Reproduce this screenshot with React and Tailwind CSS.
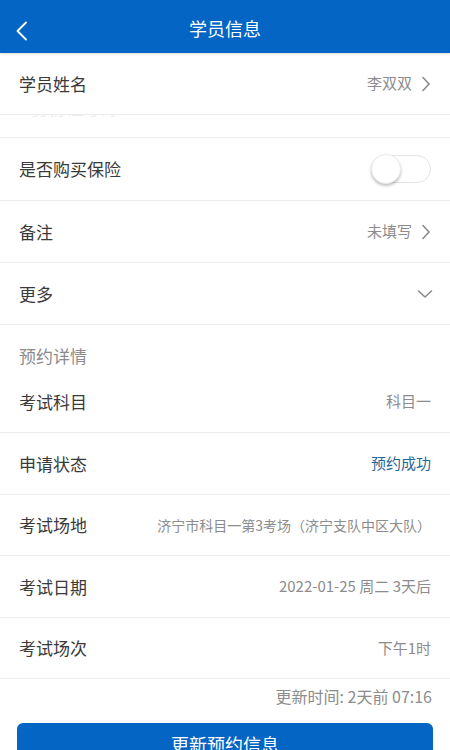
import React from "react";

const font = { fontFamily: '"Noto Sans CJK SC", "Noto Sans", sans-serif' };

const ChevronRight = () => (
    <svg width="10" height="16" viewBox="0 0 10 16" className="ml-[9px]">
        <path d="M2 1.5 L8 8 L2 14.5" fill="none" stroke="#8a8a8a" strokeWidth="1.6" strokeLinecap="round" strokeLinejoin="round" />
    </svg>
);

const ChevronDown = () => (
    <svg width="16" height="10" viewBox="0 0 16 10">
        <path d="M1.5 2 L8 8 L14.5 2" fill="none" stroke="#8a8a8a" strokeWidth="1.6" strokeLinecap="round" strokeLinejoin="round" />
    </svg>
);

function Row({ label, children, h = "h-[62px]" }) {
    return (
        <div className={`${h} flex items-center justify-between pl-[19px] pr-[19px] border-b border-[#ededed]`}>
            <span className="text-[17px] text-[#3a3a3a]">{label}</span>
            <div className="flex items-center">{children}</div>
        </div>
    );
}

const Value = ({ children, color = "text-[#8c8c8c]" }) => (
    <span className={`text-[15px] ${color}`}>{children}</span>
);

export default function App() {
    return (
        <div className="w-[450px] h-[750px] overflow-hidden bg-white" style={font}>
            {/* header */}
            <div className="h-[53px] bg-[#0565c4] flex items-center relative shadow-[0_1px_2px_rgba(0,0,0,0.15)]">
                <svg width="14" height="20" viewBox="0 0 14 20" className="absolute left-[15px] top-[21px]">
                    <path d="M11 1.5 L2.5 10 L11 18.5" fill="none" stroke="white" strokeWidth="1.8" strokeLinecap="round" strokeLinejoin="round" />
                </svg>
                <h1 className="flex-1 text-center text-white text-[18px] leading-none pt-[3px]">学员信息</h1>
            </div>

            <Row label="学员姓名">
                <Value>李双双</Value>
                <ChevronRight />
            </Row>

            {/* partially hidden row */}
            <div className="h-[23px] overflow-hidden border-b border-[#ededed] pl-[32px]">
                <div className="-mt-[17px] text-[17px] leading-[19px] text-[#ececec]">身份证号码</div>
            </div>

            <Row label="是否购买保险" h="h-[63px]">
                <div className="relative w-[60px] h-[28px] rounded-full border border-[#e4e4e4] bg-white">
                    <div className="absolute -left-[1px] -top-[2px] w-[30px] h-[30px] rounded-full bg-white border border-[#ececec] shadow-[0_2px_3px_rgba(0,0,0,0.25)]" />
                </div>
            </Row>

            <Row label="备注">
                <Value>未填写</Value>
                <ChevronRight />
            </Row>

            <Row label="更多">
                <div className="mr-[-2px]">
                    <ChevronDown />
                </div>
            </Row>

            <div className="h-[46px] flex items-center pl-[19px] pt-[16px]">
                <span className="text-[17px] text-[#8c8c8c]">预约详情</span>
            </div>

            <Row label="考试科目" h="h-[62px]">
                <Value>科目一</Value>
            </Row>
            <Row label="申请状态" h="h-[62px]">
                <Value color="text-[#1f6796]">预约成功</Value>
            </Row>
            <Row label="考试场地" h="h-[61px]">
                <span className="text-[14px] text-[#8c8c8c]">济宁市科目一第3考场（济宁支队中区大队）</span>
            </Row>
            <Row label="考试日期" h="h-[62px]">
                <Value>2022-01-25 周二 3天后</Value>
            </Row>
            <Row label="考试场次" h="h-[61px]">
                <Value>下午1时</Value>
            </Row>

            <div className="h-[34px] flex items-center justify-end pr-[18px]">
                <span className="text-[16px] text-[#8c8c8c]">更新时间: 2天前 07:16</span>
            </div>

            <div className="px-[17px] pt-[10px]">
                <button className="w-full h-[46px] rounded-[6px] bg-[#0565c4] text-white text-[18px] leading-none pt-[12px] flex justify-center">
                    更新预约信息
                </button>
            </div>
        </div>
    );
}
